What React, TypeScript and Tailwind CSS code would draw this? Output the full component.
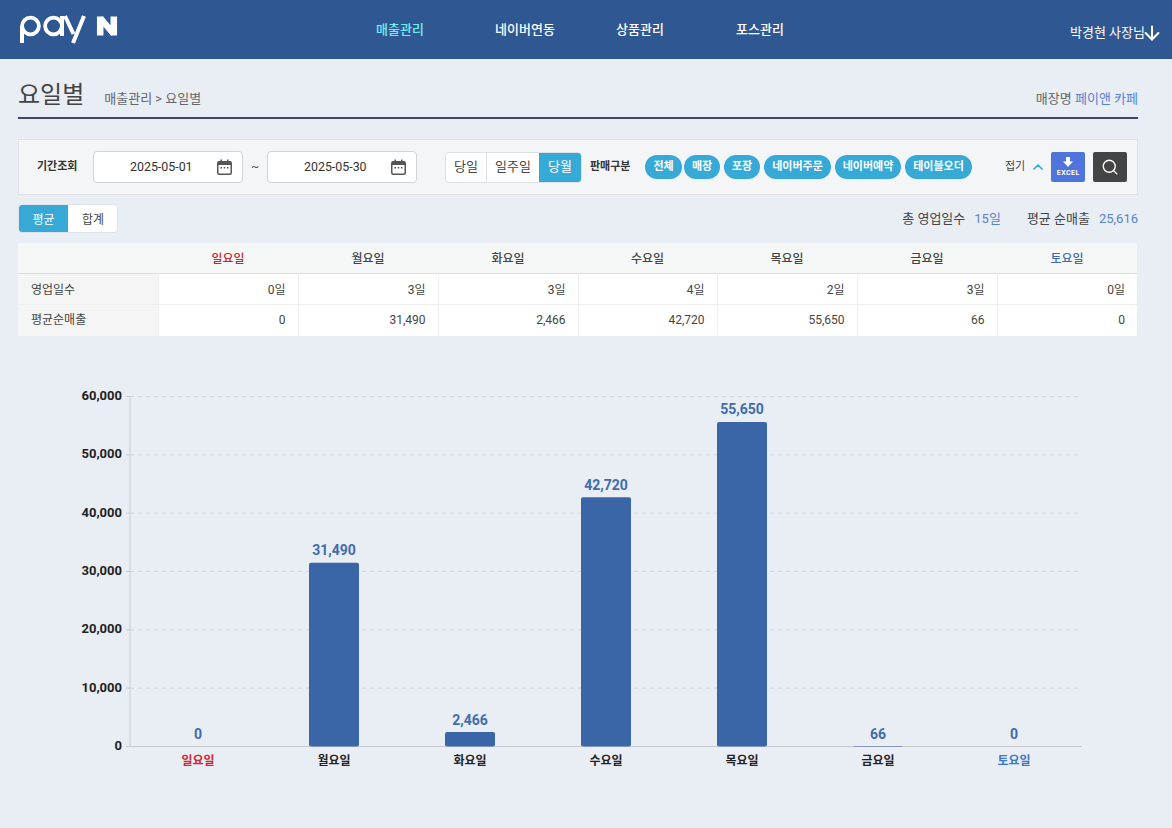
import React from 'react';
import { ArrowDown, ChevronUp, Search } from 'lucide-react';

const FONT = '[font-family:Roboto,"Noto_Sans_CJK_KR",sans-serif]';

const NAV = [
  { label: '매출관리', width: 'w-[120px]', active: true },
  { label: '네이버연동', width: 'w-[130px]', active: false },
  { label: '상품관리', width: 'w-[100px]', active: false },
  { label: '포스관리', width: 'w-[140px]', active: false },
];

const CHANNELS = [
  { label: '전체', width: 'w-[37px] -mr-[2px]' },
  { label: '매장', width: 'w-[36px]' },
  { label: '포장', width: 'w-[36px]' },
  { label: '네이버주문', width: 'w-[67px]' },
  { label: '네이버예약', width: 'w-[66px]' },
  { label: '테이블오더', width: 'w-[67px]' },
];

const DAYS = [
  { day: '일요일', open: '0일', sales: 0, col: 'w-[140px]', head: 'text-[#c9252d]', axis: '#d9232e' },
  { day: '월요일', open: '3일', sales: 31490, col: 'w-[140px]', head: 'text-[#444]', axis: '#222' },
  { day: '화요일', open: '3일', sales: 2466, col: 'w-[140px]', head: 'text-[#444]', axis: '#222' },
  { day: '수요일', open: '4일', sales: 42720, col: 'w-[139px]', head: 'text-[#444]', axis: '#222' },
  { day: '목요일', open: '2일', sales: 55650, col: 'w-[140px]', head: 'text-[#444]', axis: '#222' },
  { day: '금요일', open: '3일', sales: 66, col: 'w-[140px]', head: 'text-[#444]', axis: '#222' },
  { day: '토요일', open: '0일', sales: 0, col: 'w-[140px]', head: 'text-[#3a6db5]', axis: '#3a78c9' },
];

const Logo: React.FC = () => (
  <svg width="98" height="30" viewBox="0 0 98 30" fill="none" stroke="#fff" className="block">
    <circle cx="10.500" cy="11" r="8.400" strokeWidth="3.800" />
    <line x1="2" y1="11" x2="2" y2="28" strokeWidth="4" />
    <circle cx="33.500" cy="11" r="8.400" strokeWidth="3.800" />
    <line x1="42" y1="1" x2="42" y2="21" strokeWidth="4" />
    <path d="M45 1l8.500 18M64 1L53 28" strokeWidth="4" />
    <path d="M80.200 20.500V1.500M80.200 3L93.800 19M93.800 20.500V1.500" strokeWidth="6.500" />
  </svg>
);

const CalendarIcon: React.FC = () => (
  <svg width="15" height="16" viewBox="0 0 15 16" className="block">
    <rect x="0.750" y="2.750" width="13.500" height="12.500" rx="1.500" fill="none" stroke="#555" strokeWidth="1.500" />
    <rect x="1" y="2.500" width="13" height="3.500" fill="#555" />
    <rect x="3.500" y="0.500" width="1.500" height="3" fill="#555" />
    <rect x="10" y="0.500" width="1.500" height="3" fill="#555" />
    <rect x="3.500" y="8" width="1.500" height="1.500" fill="#555" />
    <rect x="6.750" y="8" width="1.500" height="1.500" fill="#555" />
    <rect x="10" y="8" width="1.500" height="1.500" fill="#555" />
  </svg>
);

const DateField: React.FC<{ value: string }> = ({ value }) => (
  <div className="flex h-[32px] w-[150px] items-center rounded-[4px] border border-[#d3d3d3] bg-white pr-[10px] pl-[36px]">
    <span className="flex-1 pt-[1px] text-[12.4px] text-[#333]">{value}</span>
    <CalendarIcon />
  </div>
);

const Chart: React.FC = () => {
  const left = 130;
  const band = 136;
  const zero = 746.5;
  const pxPerUnit = 350 / 60000;
  const ticks = [60000, 50000, 40000, 30000, 20000, 10000, 0];

  return (
    <svg width="1172" height="452" viewBox="0 336 1172 452" className="block">
      {ticks.map((tick) => {
        const y = zero - tick * pxPerUnit;
        return (
          <g key={tick}>
            <line x1="126" x2={left} y1={y} y2={y} stroke="#c8cacc" />
            {tick > 0 && <line x1={left} x2="1078" y1={y} y2={y} stroke="#d3d5d8" strokeDasharray="4 4" />}
            <text x="122" y={y + 3.500} textAnchor="end" fontSize="13" fontWeight="700" fill="#222">
              {tick.toLocaleString('en-US')}
            </text>
          </g>
        );
      })}
      <line x1={left} x2={left} y1="396" y2={zero} stroke="#c8cacc" />
      <line x1={left} x2="1082" y1={zero} y2={zero} stroke="#c8cacc" />
      {DAYS.map((item, i) => {
        const center = left + band * i + 68;
        const height = item.sales * pxPerUnit;
        return (
          <g key={item.day}>
            {item.sales > 0 && (
              <rect x={center - 25} y={zero - height} width="50" height={height} rx="2" fill="#3a66a8" />
            )}
            <text x={center} y={zero - height - 7.500} textAnchor="middle" fontSize="14" fontWeight="700" fill="#3f6cad">
              {item.sales.toLocaleString('en-US')}
            </text>
            <text x={center} y="765" textAnchor="middle" fontSize="12" fontWeight="700" fill={item.axis}>
              {item.day}
            </text>
          </g>
        );
      })}
    </svg>
  );
};

export default function App() {
  return (
    <div className={`min-h-[828px] w-[1172px] bg-[#e9edf4] ${FONT}`}>
      {/* Top bar */}
      <header className="relative flex h-[59px] items-center bg-[#2f5892] pl-[20px] text-white">
        <Logo />
        <nav className="ml-[222px] flex items-center text-[13px] font-medium">
          {NAV.map((item) => (
            <span key={item.label} className={`${item.width} shrink-0 text-center ${item.active ? 'text-[#6ff0f5]' : 'text-white'}`}>
              {item.label}
            </span>
          ))}
        </nav>
        <div className="absolute top-[22px] right-[9px] flex items-center text-[13px]">
          <span>박경현 사장님</span>
          <ArrowDown className="-ml-[4px] h-[22px] w-[22px]" strokeWidth={2.200} />
        </div>
      </header>

      <main className="pr-[34px] pl-[18px]">
        {/* Page title */}
        <div className="flex h-[60px] items-center border-b-2 border-[#43446e] pt-[13px]">
          <h1 className="text-[24px] leading-none font-normal text-[#444]">요일별</h1>
          <span className="ml-[20px] pt-[8px] text-[13px] text-[#666]">매출관리 &gt; 요일별</span>
          <span className="ml-auto pt-[8px] text-[13px] text-[#666]">
            매장명 <span className="text-[#5a82d6]">페이앤 카페</span>
          </span>
        </div>

        {/* Filters */}
        <section className="mt-[20px] flex h-[56px] items-center border border-[#dfe1e4] bg-[#f4f5f7] pl-[18px]">
          <span className="w-[56px] text-[11px] font-bold text-[#333]">기간조회</span>
          <DateField value="2025-05-01" />
          <span className="w-[24px] text-center text-[12px] text-[#555]">~</span>
          <DateField value="2025-05-30" />
          <div className="ml-[28px] flex h-[31px] overflow-hidden rounded-[4px] border border-[#e0e0e0] bg-white text-[13px] text-[#444]">
            <span className="flex w-[41px] items-center justify-center border-r border-[#e0e0e0]">당일</span>
            <span className="flex w-[52px] items-center justify-center">일주일</span>
            <span className="flex w-[42px] items-center justify-center bg-[#36a9d6] text-white">당월</span>
          </div>
          <span className="ml-[8px] w-[55px] shrink-0 text-[11px] font-bold text-[#333]">판매구분</span>
          <div className="flex gap-[4px]">
            {CHANNELS.map((item) => (
              <span key={item.label} className={`flex h-[24px] ${item.width} items-center justify-center rounded-full bg-[#36a9d6] text-[11px] font-bold text-white`}>
                {item.label}
              </span>
            ))}
          </div>
          <span className="ml-[33px] text-[11px] text-[#444]">접기</span>
          <ChevronUp className="ml-[5px] h-[16px] w-[16px] text-[#36a9d6]" strokeWidth={2.500} />
          <button className="ml-[5px] flex h-[30px] w-[34px] flex-col items-center justify-center rounded-[2px] bg-[#4f74dc] text-white">
            <svg width="10" height="10" viewBox="0 0 10 10" fill="#fff" className="block">
              <path d="M3 0h4v4.500h3L5 10 0 4.500h3z" />
            </svg>
            <span className="mt-[2px] text-[7px] leading-[8px] font-bold tracking-[0.5px]">EXCEL</span>
          </button>
          <button className="ml-[8px] flex h-[30px] w-[34px] items-center justify-center rounded-[2px] bg-[#444] text-white">
            <Search className="h-[18px] w-[18px]" strokeWidth={1.800} />
          </button>
        </section>

        {/* Summary */}
        <div className="mt-[8px] flex h-[30px] items-center">
          <div className="flex h-[29px] w-[100px] overflow-hidden rounded-[4px] border border-[#dfe3ea] bg-white text-[12px]">
            <span className="flex w-[49px] items-center justify-center bg-[#36a9d6] pt-[3px] text-white">평균</span>
            <span className="flex flex-1 items-center justify-center pt-[3px] pl-[1px] text-[#444]">합계</span>
          </div>
          <div className="ml-auto flex pt-[2px] text-[13px] text-[#444]">
            <span>총 영업일수</span>
            <span className="ml-[9px] text-[#5a82d6]">15일</span>
            <span className="ml-[26px]">평균 순매출</span>
            <span className="ml-[9px] text-[#5a82d6]">25,616</span>
          </div>
        </div>

        {/* Table */}
        <table className="mt-[10px] w-[1119px] table-fixed border-collapse text-[12px] text-[#444]">
          <thead>
            <tr className="h-[30px] border-b border-[#dcdcdc] bg-[#f6f7f7] text-[12px]">
              <th className="w-[140px]" />
              {DAYS.map((item) => (
                <th key={item.day} className={`${item.col} pt-[2px] font-medium ${item.head}`}>
                  {item.day}
                </th>
              ))}
            </tr>
          </thead>
          <tbody>
            <tr className="h-[31px] border-b border-[#eeeeee]">
              <td className="bg-[#f5f5f5] pt-[2px] pl-[13px]">영업일수</td>
              {DAYS.map((item) => (
                <td key={item.day} className="border-l border-[#eeeeee] bg-white pt-[2px] pr-[12px] text-right">
                  {item.open}
                </td>
              ))}
            </tr>
            <tr className="h-[32px]">
              <td className="bg-[#f5f5f5] pl-[13px]">평균순매출</td>
              {DAYS.map((item) => (
                <td key={item.day} className="border-l border-[#eeeeee] bg-white pr-[12px] text-right">
                  {item.sales.toLocaleString('en-US')}
                </td>
              ))}
            </tr>
          </tbody>
        </table>
      </main>

      <Chart />
    </div>
  );
}
